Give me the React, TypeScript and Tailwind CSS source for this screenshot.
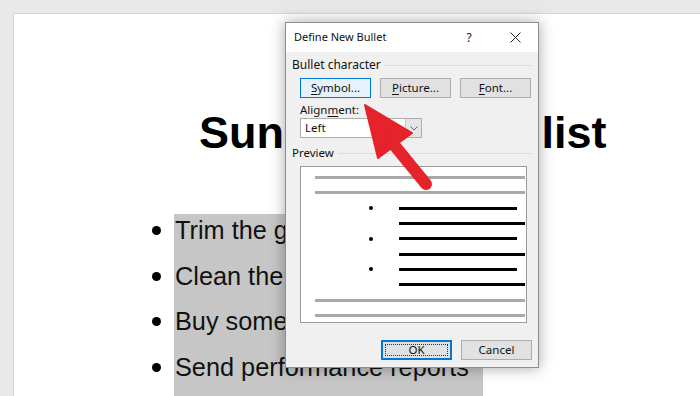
import React from "react";

const ui = { fontFamily: '"Noto Sans", "Open Sans", sans-serif' };
const arial = { fontFamily: '"Liberation Sans", Arial, sans-serif' };

function Btn({ children, focused = false, w = "w-[71px]" }: { children: React.ReactNode; focused?: boolean; w?: string }) {
  return (
    <div
      className={`${w} h-[20px] flex items-center justify-center text-[11.5px] leading-none text-[#111] border ${
        focused ? "border-[#0078d7] bg-[#e5f1fb]" : "border-[#adadad] bg-[#e1e1e1]"
      }`}
    >
      {children}
    </div>
  );
}

function PreviewLine({ kind }: { kind: "gray" | "bullet" | "long" }) {
  if (kind === "gray") return <div className="h-[3px] w-[210px] bg-[#a9a9a9]" />;
  if (kind === "bullet")
    return (
      <div className="h-[3px] flex items-center">
        <div className="ml-[54px] w-[4px] h-[4px] rounded-full bg-black" />
        <div className="ml-[26px] h-[3px] w-[118px] bg-black" />
      </div>
    );
  return (
    <div className="h-[3px] flex items-center">
      <div className="ml-[84px] h-[3px] w-[126px] bg-black" />
    </div>
  );
}

export default function App() {
  const items = ["Trim the grass", "Clean the garage", "Buy some groceries", "Send performance reports"];
  const lines: ("gray" | "bullet" | "long")[] = ["gray", "gray", "bullet", "long", "bullet", "long", "bullet", "long", "gray", "gray"];
  return (
    <div className="relative w-[700px] h-[396px] overflow-hidden bg-[#e8e8e8]">
      {/* Document page */}
      <div className="ml-[13px] mt-[13px] h-[383px] bg-white border-l border-t border-[#d6d6d6]" style={arial}>
        <div className="pt-[96px] pl-[185px]">
          <div className="h-[45px] leading-[45px] text-[45px] font-bold text-black whitespace-nowrap">Sunday Chores list</div>
        </div>
        <div className="mt-[53px] ml-[138px] flex items-start">
          <div className="w-[22px] flex flex-col">
            {items.map((t) => (
              <div key={t} className="h-[45.6px] flex items-center">
                <div className="w-[9px] h-[9px] rounded-full bg-black" />
              </div>
            ))}
          </div>
          <div className="mt-[6px] w-[309px] h-[200px] bg-[#c6c6c6]">
            <div className="-mt-[6px] pl-[1px] flex flex-col">
              {items.map((t) => (
                <div key={t} className="h-[45.6px] leading-[45.6px] text-[25.3px] text-[#111] whitespace-nowrap">
                  {t}
                </div>
              ))}
            </div>
          </div>
        </div>
      </div>

      {/* Dialog window */}
      <div
        className="absolute left-[285px] top-[22px] w-[254px] h-[346px] border border-[#8e8e8e] bg-[#f0f0f0] shadow-[0_0_14px_rgba(0,0,0,0.35)] flex flex-col"
        style={ui}
      >
        <div className="h-[29px] bg-white flex items-center">
          <div className="pl-[8px] text-[11px] text-[#111]">Define New Bullet</div>
          <div className="ml-auto flex h-full">
            <div className="w-[46px] h-full flex items-center justify-center text-[12px] text-[#222]">?</div>
            <div className="w-[46px] h-full flex items-center justify-center">
              <svg width="11" height="11" viewBox="0 0 11 11">
                <path d="M0.5 0.5 L10.5 10.5 M10.5 0.5 L0.5 10.5" stroke="#222" strokeWidth="1" />
              </svg>
            </div>
          </div>
        </div>

        <div className="pl-[6px] pr-[6px] pt-[5px] flex items-center">
          <span className="text-[12px] leading-[16px] text-[#111] whitespace-nowrap">Bullet character</span>
          <div className="ml-[4px] flex-1 h-[1px] bg-[#dcdcdc]" />
        </div>

        <div className="mt-[5px] ml-[14px] flex gap-[9px]">
          <Btn focused>
            <span><u className="underline-offset-2">S</u>ymbol...</span>
          </Btn>
          <Btn>
            <span><u className="underline-offset-2">P</u>icture...</span>
          </Btn>
          <Btn>
            <span><u className="underline-offset-2">F</u>ont...</span>
          </Btn>
        </div>

        <div className="mt-[4px] ml-[14px] text-[11.5px] leading-[16px] text-[#111]">
          Align<u className="underline-offset-2">m</u>ent:
        </div>

        <div className="ml-[14px] w-[122px] h-[20px] flex border border-[#adadad] bg-white">
          <div className="flex-1 pl-[4px] text-[11.5px] leading-[18px] text-[#111]">Left</div>
          <div className="w-[16px] h-full bg-[#e5e5e5] border-l border-[#c8c8c8] flex items-center justify-center">
            <svg width="8" height="5" viewBox="0 0 8 5">
              <path d="M0.5 0.5 L4 4 L7.5 0.5" fill="none" stroke="#666" strokeWidth="1" />
            </svg>
          </div>
        </div>

        <div className="mt-[7px] pl-[6px] pr-[6px] flex items-center">
          <span className="text-[11.5px] leading-[16px] text-[#111]">Preview</span>
          <div className="ml-[4px] flex-1 h-[1px] bg-[#dcdcdc]" />
        </div>

        <div className="mt-[5px] ml-[14px] w-[227px] h-[157px] border border-[#9a9a9a] bg-white pt-[9px] pl-[14px] flex flex-col gap-[12.33px]">
          {lines.map((k, i) => (
            <PreviewLine key={i} kind={k} />
          ))}
        </div>

        <div className="mt-[17px] ml-[95px] flex gap-[9px]">
          <div className="w-[71px] h-[20px] border-2 border-[#0078d7] bg-[#e1e1e1] flex items-center justify-center">
            <div className="w-[63px] h-[12px] border border-dotted border-[#333] flex items-center justify-center text-[11.5px] leading-none text-[#111]">
              OK
            </div>
          </div>
          <Btn>Cancel</Btn>
        </div>
      </div>

      {/* Red arrow annotation */}
      <svg className="absolute left-0 top-0 pointer-events-none" width="700" height="396" viewBox="0 0 700 396">
        <polygon points="365,105 378,158 412,133" fill="#e5232b" stroke="#e5232b" strokeWidth="2" strokeLinejoin="round" />
        <line x1="390" y1="140" x2="426" y2="184" stroke="#e5232b" strokeWidth="12" strokeLinecap="round" />
      </svg>
    </div>
  );
}
